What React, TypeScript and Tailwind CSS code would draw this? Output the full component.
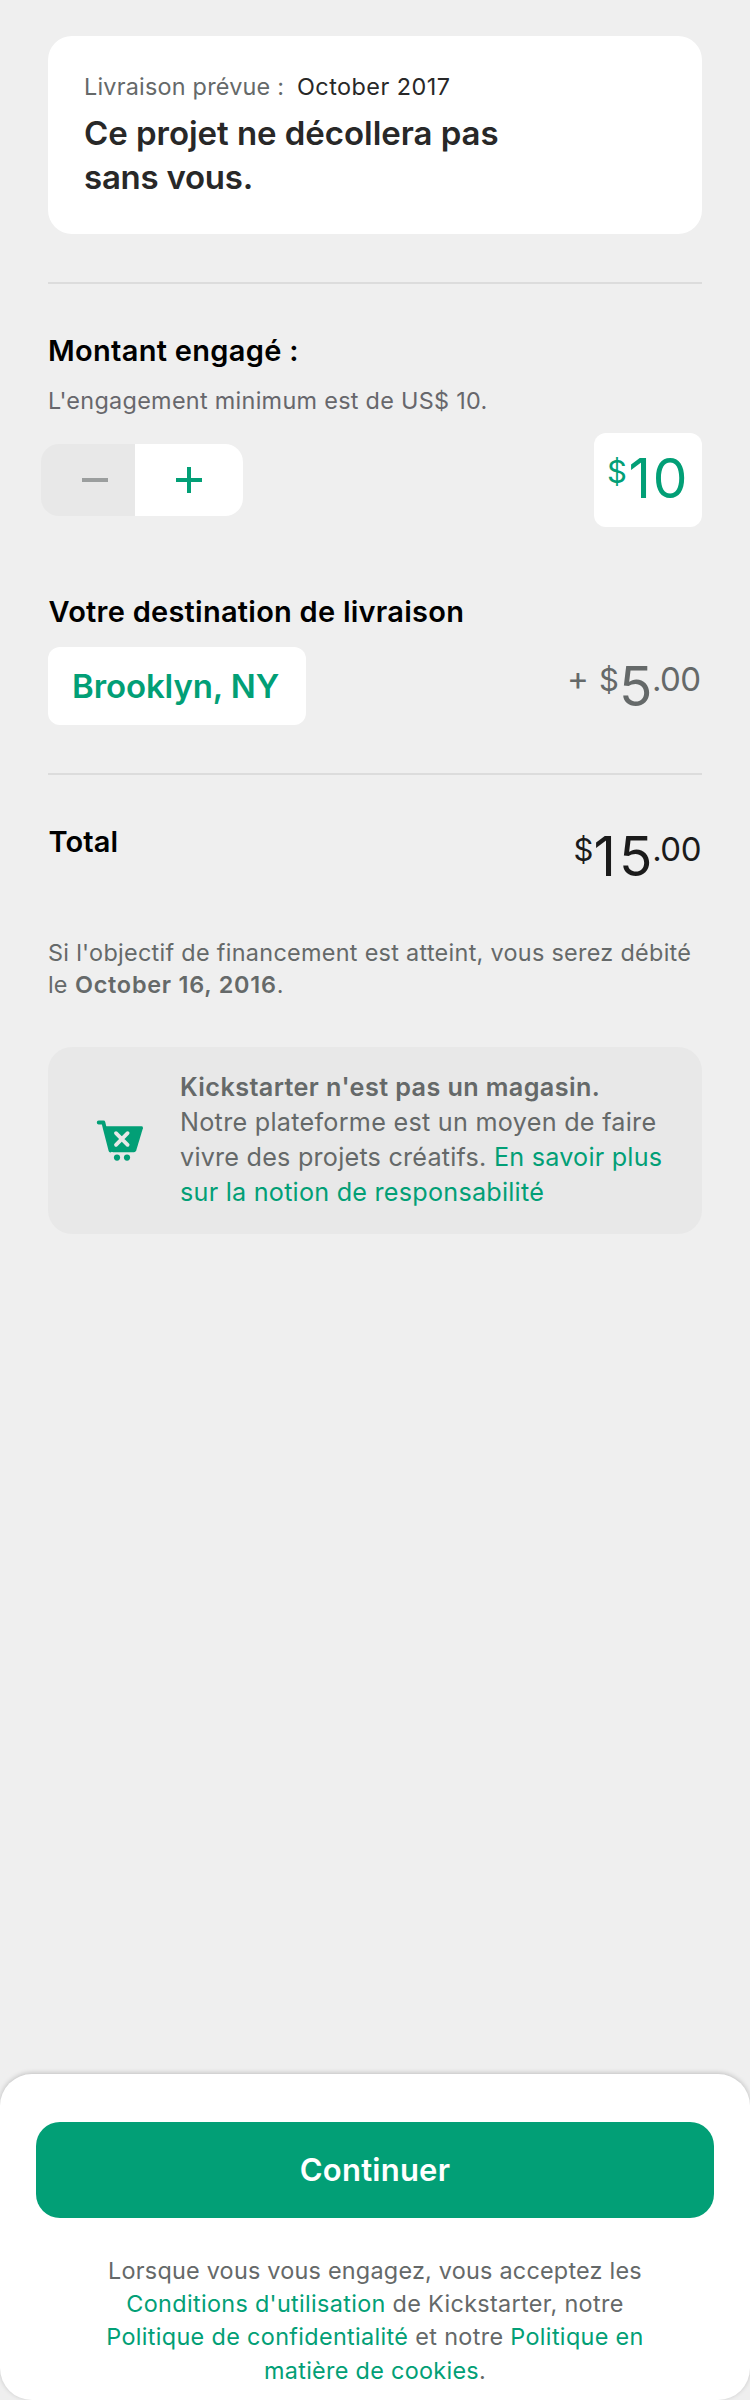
const small = "text-[23.4px] leading-[33px] whitespace-nowrap";
const body = "block text-[25.2px] leading-[35px] whitespace-nowrap";
const heading = "text-[29px] leading-[35px] font-semibold text-black whitespace-nowrap";
const link = "text-[#029f76]";

function CartIcon() {
  return (
    <svg className="h-[60px] w-[60px] shrink-0" viewBox="0 0 60 60" fill="none">
      <path
        d="M8.7 12.5H13.4L14.7 18L20.5 40.5"
        stroke="#029f76"
        strokeWidth="3.8"
        strokeLinecap="round"
        strokeLinejoin="round"
      />
      <path
        d="M14.5 16.3H51.6Q53.4 16.5 52.9 18.3L46.2 40.4Q45.6 42.2 43.9 42.2H23.2Q21.4 42.2 20.8 40.4Z"
        fill="#029f76"
      />
      <path d="M26 23.2L37.6 34.8M37.6 23.2L26 34.8" stroke="#e8e8e8" strokeWidth="3.8" strokeLinecap="round" />
      <circle cx="27" cy="47.6" r="3.1" fill="#029f76" />
      <circle cx="37" cy="47.6" r="3.1" fill="#029f76" />
    </svg>
  );
}

function RewardCard() {
  return (
    <section className="h-[198px] rounded-[24px] bg-white pt-[34px] pl-9">
      <div className={`flex ${small}`}>
        <span className="w-[213px] tracking-[0.22px] text-[#656969]">Livraison prévue :</span>
        <span className="tracking-[0.46px] text-[#282828]">October 2017</span>
      </div>
      <h1 className="mt-2 text-[33px] leading-[44px] font-semibold whitespace-nowrap text-[#282828]">
        <span className="block tracking-[-0.04px]">Ce projet ne décollera pas</span>
        <span className="block tracking-[-0.25px]">sans vous.</span>
      </h1>
    </section>
  );
}

function Stepper() {
  return (
    <div className="-ml-[7px] flex h-[72px] w-[202px] overflow-hidden rounded-[18px]">
      <button className="flex w-[94px] items-center bg-[#e8e8e8] pl-[41px]" aria-label="−">
        <span className="h-1 w-[26px] bg-[#9b9e9e]" />
      </button>
      <button className="flex w-[108px] items-center justify-center bg-white" aria-label="+">
        <svg width="26" height="26" viewBox="0 0 26 26">
          <path d="M0 13H26M13 0V26" stroke="#029f76" strokeWidth="4" />
        </svg>
      </button>
    </div>
  );
}

export default function App() {
  return (
    <div className="flex h-[2400px] w-[750px] flex-col overflow-hidden bg-[#efefef] font-['Inter',sans-serif]">
      <main className="px-12 pt-9">
        <RewardCard />

        <div className="mt-12 h-0.5 bg-[#dcdcdc]" />

        <h2 className={`mt-[49px] tracking-[0.3px] ${heading}`}>Montant engagé :</h2>
        <p className={`mt-4 tracking-[0.3px] text-[#67676c] ${small}`}>
          L'engagement minimum est de US$ 10.
        </p>
        <div className="mt-4 flex items-center justify-between">
          <Stepper />
          <div className="flex h-[94px] w-[108px] items-start rounded-xl bg-white pt-3 pl-[13px] text-[#029f76]">
            <span className="mt-[9px] w-[21.5px] text-[31px] leading-9">$</span>
            <span className="text-[55px] leading-[66px] tracking-[2px]">10</span>
          </div>
        </div>

        <h2 className={`mt-[67px] ml-[0.5px] tracking-[0.25px] ${heading}`}>Votre destination de livraison</h2>
        <div className="mt-[18px] flex items-start justify-between">
          <button className="flex h-[78px] w-[258px] items-center rounded-xl bg-white pl-6 text-[33px] leading-[44px] font-[570] tracking-[-0.1px] whitespace-nowrap text-[#029f76]">
            Brooklyn, NY
          </button>
          <div className="flex items-start text-[#656969]">
            <span className="mt-[13px] w-8 text-[33px] leading-[36px]">+</span>
            <span className="mt-[15px] w-[20px] text-[31px] leading-9">$</span>
            <span className="mt-1.5 w-[33px] text-[55px] leading-[66px]">5</span>
            <span className="mt-2.5 w-[50px] text-[33px] leading-[44px] tracking-[-0.6px]">.00</span>
          </div>
        </div>

        <div className="mt-12 h-0.5 bg-[#dcdcdc]" />

        <div className="mt-12 flex items-start justify-between">
          <h2 className={`mt-px ml-[0.5px] tracking-[0.1px] ${heading}`}>Total</h2>
          <div className="flex items-start text-[#1b1b1b]">
            <span className="mt-[9px] w-5 text-[31px] leading-9">$</span>
            <span className="w-[58.7px] text-[55px] leading-[66px] tracking-[3px]">15</span>
            <span className="mt-1 w-[49.8px] text-[33px] leading-[44px] tracking-[-0.5px]">.00</span>
          </div>
        </div>

        <p className={`mt-[47px] text-[#656969] ${small}`}>
          <span className="block tracking-[0.3px]">
            Si l'objectif de financement est atteint, vous serez débité
          </span>
          <span className="-mt-px block">
            le <b className="ml-px font-semibold tracking-[0.78px]">October 16, 2016</b>.
          </span>
        </p>

        <section className="mt-[46px] flex h-[187px] items-start rounded-[24px] bg-[#e8e8e8] pt-[23px] pl-[42px] text-[#656969]">
          <div className="mt-10">
            <CartIcon />
          </div>
          <p className="ml-[30px]">
            <b className={`font-semibold tracking-[0.4px] ${body}`}>Kickstarter n'est pas un magasin.</b>
            <span className={`tracking-[0.27px] ${body}`}>Notre plateforme est un moyen de faire</span>
            <span className={`tracking-[0.22px] ${body}`}>
              vivre des projets créatifs. <a className={link}>En savoir plus</a>
            </span>
            <a className={`tracking-[0.23px] ${body} ${link}`}>sur la notion de responsabilité</a>
          </p>
        </section>
      </main>

      <footer className="mt-auto h-[326px] rounded-[32px] bg-white px-9 pt-12 shadow-[0_-1px_5px_rgba(0,0,0,0.2)]">
        <button className="flex h-24 w-full items-center justify-center rounded-[24px] bg-[#029f76] pb-0.5 text-[31px] leading-[37px] font-[570] tracking-[0.24px] text-white">
          Continuer
        </button>
        <p className={`mt-9 text-center text-[#656969] ${small}`}>
          <span className="block tracking-[0.23px]">Lorsque vous vous engagez, vous acceptez les</span>
          <span className="block tracking-[0.327px]">
            <a className={link}>Conditions d'utilisation</a> de Kickstarter, notre
          </span>
          <span className="block tracking-[0.341px]">
            <a className={link}>Politique de confidentialité</a> et notre <a className={link}>Politique en</a>
          </span>
          <span className="mt-px block tracking-[0.297px]">
            <a className={link}>matière de cookies</a>.
          </span>
        </p>
      </footer>
    </div>
  );
}
